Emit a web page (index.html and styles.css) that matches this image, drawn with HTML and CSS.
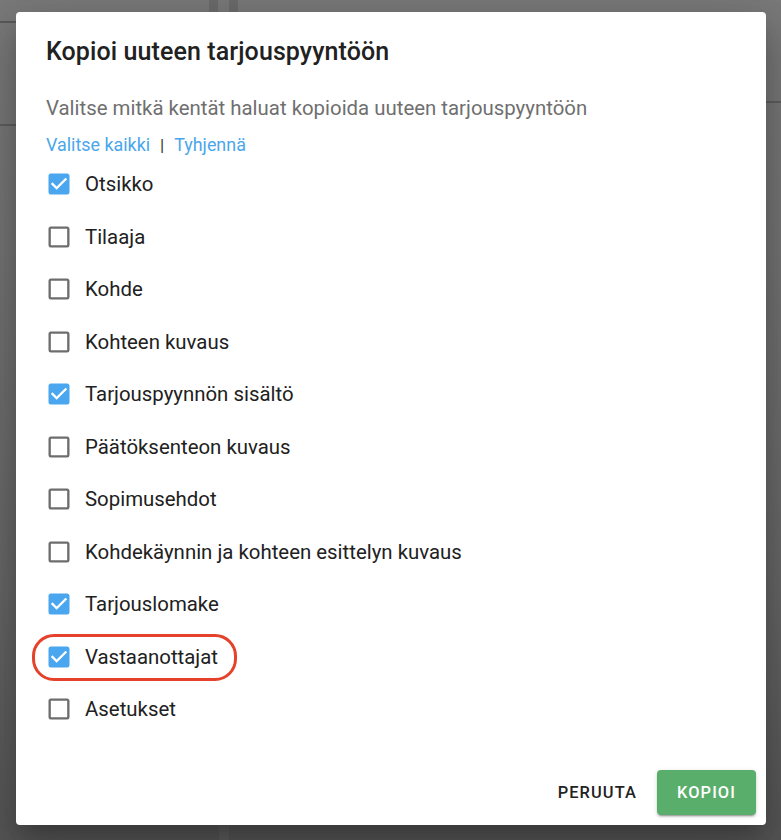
FILE: index.html
```html
<!DOCTYPE html>
<html lang="fi">
<head>
<meta charset="utf-8">
<title>Kopioi uuteen tarjouspyyntöön</title>
<link rel="stylesheet" href="styles.css">
</head>
<body>
<div class="backdrop"></div>
<div class="overlay">
  <div class="dialog">
    <h1 class="title">Kopioi uuteen tarjouspyyntöön</h1>
    <div class="content">
      <p class="subtitle">Valitse mitkä kentät haluat kopioida uuteen tarjouspyyntöön</p>
      <div class="links"><a class="link">Valitse kaikki</a><span class="sep">|</span><a class="link">Tyhjennä</a></div>
      <ul class="list">
        <li class="item checked"><svg class="box" viewBox="0 0 24 24"><path d="M10,17L5,12L6.41,10.58L10,14.17L17.59,6.58L19,8M19,3H5C3.89,3 3,3.89 3,5V19A2,2 0 0,0 5,21H19A2,2 0 0,0 21,19V5C21,3.89 20.1,3 19,3Z"/></svg><span class="label">Otsikko</span></li>
        <li class="item"><svg class="box" viewBox="0 0 24 24"><path d="M19,3H5C3.89,3 3,3.89 3,5V19A2,2 0 0,0 5,21H19A2,2 0 0,0 21,19V5C21,3.89 20.1,3 19,3M19,5V19H5V5H19Z"/></svg><span class="label">Tilaaja</span></li>
        <li class="item"><svg class="box" viewBox="0 0 24 24"><path d="M19,3H5C3.89,3 3,3.89 3,5V19A2,2 0 0,0 5,21H19A2,2 0 0,0 21,19V5C21,3.89 20.1,3 19,3M19,5V19H5V5H19Z"/></svg><span class="label">Kohde</span></li>
        <li class="item"><svg class="box" viewBox="0 0 24 24"><path d="M19,3H5C3.89,3 3,3.89 3,5V19A2,2 0 0,0 5,21H19A2,2 0 0,0 21,19V5C21,3.89 20.1,3 19,3M19,5V19H5V5H19Z"/></svg><span class="label">Kohteen kuvaus</span></li>
        <li class="item checked"><svg class="box" viewBox="0 0 24 24"><path d="M10,17L5,12L6.41,10.58L10,14.17L17.59,6.58L19,8M19,3H5C3.89,3 3,3.89 3,5V19A2,2 0 0,0 5,21H19A2,2 0 0,0 21,19V5C21,3.89 20.1,3 19,3Z"/></svg><span class="label">Tarjouspyynnön sisältö</span></li>
        <li class="item"><svg class="box" viewBox="0 0 24 24"><path d="M19,3H5C3.89,3 3,3.89 3,5V19A2,2 0 0,0 5,21H19A2,2 0 0,0 21,19V5C21,3.89 20.1,3 19,3M19,5V19H5V5H19Z"/></svg><span class="label">Päätöksenteon kuvaus</span></li>
        <li class="item"><svg class="box" viewBox="0 0 24 24"><path d="M19,3H5C3.89,3 3,3.89 3,5V19A2,2 0 0,0 5,21H19A2,2 0 0,0 21,19V5C21,3.89 20.1,3 19,3M19,5V19H5V5H19Z"/></svg><span class="label">Sopimusehdot</span></li>
        <li class="item"><svg class="box" viewBox="0 0 24 24"><path d="M19,3H5C3.89,3 3,3.89 3,5V19A2,2 0 0,0 5,21H19A2,2 0 0,0 21,19V5C21,3.89 20.1,3 19,3M19,5V19H5V5H19Z"/></svg><span class="label">Kohdekäynnin ja kohteen esittelyn kuvaus</span></li>
        <li class="item checked"><svg class="box" viewBox="0 0 24 24"><path d="M10,17L5,12L6.41,10.58L10,14.17L17.59,6.58L19,8M19,3H5C3.89,3 3,3.89 3,5V19A2,2 0 0,0 5,21H19A2,2 0 0,0 21,19V5C21,3.89 20.1,3 19,3Z"/></svg><span class="label">Tarjouslomake</span></li>
        <li class="item checked"><svg class="box" viewBox="0 0 24 24"><path d="M10,17L5,12L6.41,10.58L10,14.17L17.59,6.58L19,8M19,3H5C3.89,3 3,3.89 3,5V19A2,2 0 0,0 5,21H19A2,2 0 0,0 21,19V5C21,3.89 20.1,3 19,3Z"/></svg><span class="label">Vastaanottajat</span><span class="ring"></span></li>
        <li class="item"><svg class="box" viewBox="0 0 24 24"><path d="M19,3H5C3.89,3 3,3.89 3,5V19A2,2 0 0,0 5,21H19A2,2 0 0,0 21,19V5C21,3.89 20.1,3 19,3M19,5V19H5V5H19Z"/></svg><span class="label">Asetukset</span></li>
      </ul>
    </div>
    <div class="actions">
      <button class="btn btn-text">PERUUTA</button>
      <button class="btn btn-primary">KOPIOI</button>
    </div>
  </div>
</div>
</body>
</html>
```
FILE: styles.css
```css
* { box-sizing: border-box; }
html, body { margin: 0; padding: 0; }
body {
  width: 781px;
  height: 840px;
  overflow: hidden;
  position: relative;
  font-family: Roboto, "Liberation Sans", sans-serif;
  background: #6f6f6f;
}
.backdrop {
  position: absolute;
  inset: 0;
  background:
    linear-gradient(#5a5a5a, #5a5a5a) 0 21px / 16px 2px no-repeat,
    linear-gradient(#5e5e5e, #5e5e5e) 0 124px / 16px 2px no-repeat,
    linear-gradient(#5e5e5e, #5e5e5e) 766px 101px / 15px 2px no-repeat,
    linear-gradient(#6c6c6c, #6c6c6c) 209px 0 / 9px 12px no-repeat,
    linear-gradient(#6c6c6c, #6c6c6c) 229px 0 / 9px 12px no-repeat,
    linear-gradient(#5c5c5c, #5c5c5c) 219px 825px / 10px 15px no-repeat,
    linear-gradient(180deg, #7a7a7a 0%, #747474 30%, #666 70%, #555 100%);
}
.overlay {
  position: absolute;
  inset: 0;
  padding: 12px 15px 15px 16px;
  display: flex;
}
.dialog {
  width: 750px;
  height: 813px;
  background: #fff;
  border-radius: 4px;
  display: flex;
  flex-direction: column;
  box-shadow: 0 11px 18px -7px rgba(0,0,0,.2), 0 24px 45px 3px rgba(0,0,0,.14), 0 9px 55px 8px rgba(0,0,0,.12);
}
.title {
  margin: 0;
  padding: 24px 29px 0 30px;
  font-size: 25px;
  font-weight: 500;
  line-height: 32px;
  color: #212121;
  letter-spacing: 0.1px;
}
.content {
  padding: 0 29px 0 30px;
  flex: 1;
}
.subtitle {
  margin: 26px 0 0;
  font-size: 20.4px;
  line-height: 28px;
  color: #6f6f6f;
}
.links {
  margin-top: 11px;
  font-size: 17.9px;
  line-height: 24px;
  display: flex;
  align-items: center;
}
.link { color: #4aa6ec; }
.sep { color: #333; margin: 0 10px 0 10px; font-size: 17px; font-weight: 400; }
.list {
  list-style: none;
  margin: 1px 0 0;
  padding: 0;
}
.item {
  position: relative;
  height: 52.5px;
  display: flex;
  align-items: center;
  gap: 12.5px;
}
.box {
  width: 28px;
  height: 28px;
  margin-left: -1.5px;
  fill: #6d6d6d;
  flex: none;
}
.checked .box { fill: #4aa6ee; }
.label {
  font-size: 20.4px;
  color: #212121;
}
.ring {
  position: absolute;
  left: -14px;
  top: 3px;
  width: 205px;
  height: 47px;
  border: 3px solid #e5412b;
  border-radius: 22px;
}
.actions {
  display: flex;
  justify-content: flex-end;
  align-items: center;
  gap: 20px;
  padding: 0 10px 10px;
}
.btn {
  font-family: Roboto, "Liberation Sans", sans-serif;
  font-size: 16.4px;
  font-weight: 500;
  letter-spacing: 1.1px;
  border: none;
  background: none;
  height: 45px;
  border-radius: 4px;
  cursor: pointer;
}
.btn-text { color: #222; padding: 0; }
.btn-primary {
  width: 99px;
  background: #5aae6b;
  color: #fff;
  box-shadow: 0 3px 1px -2px rgba(0,0,0,.2), 0 2px 2px 0 rgba(0,0,0,.14), 0 1px 5px 0 rgba(0,0,0,.12);
}
```
